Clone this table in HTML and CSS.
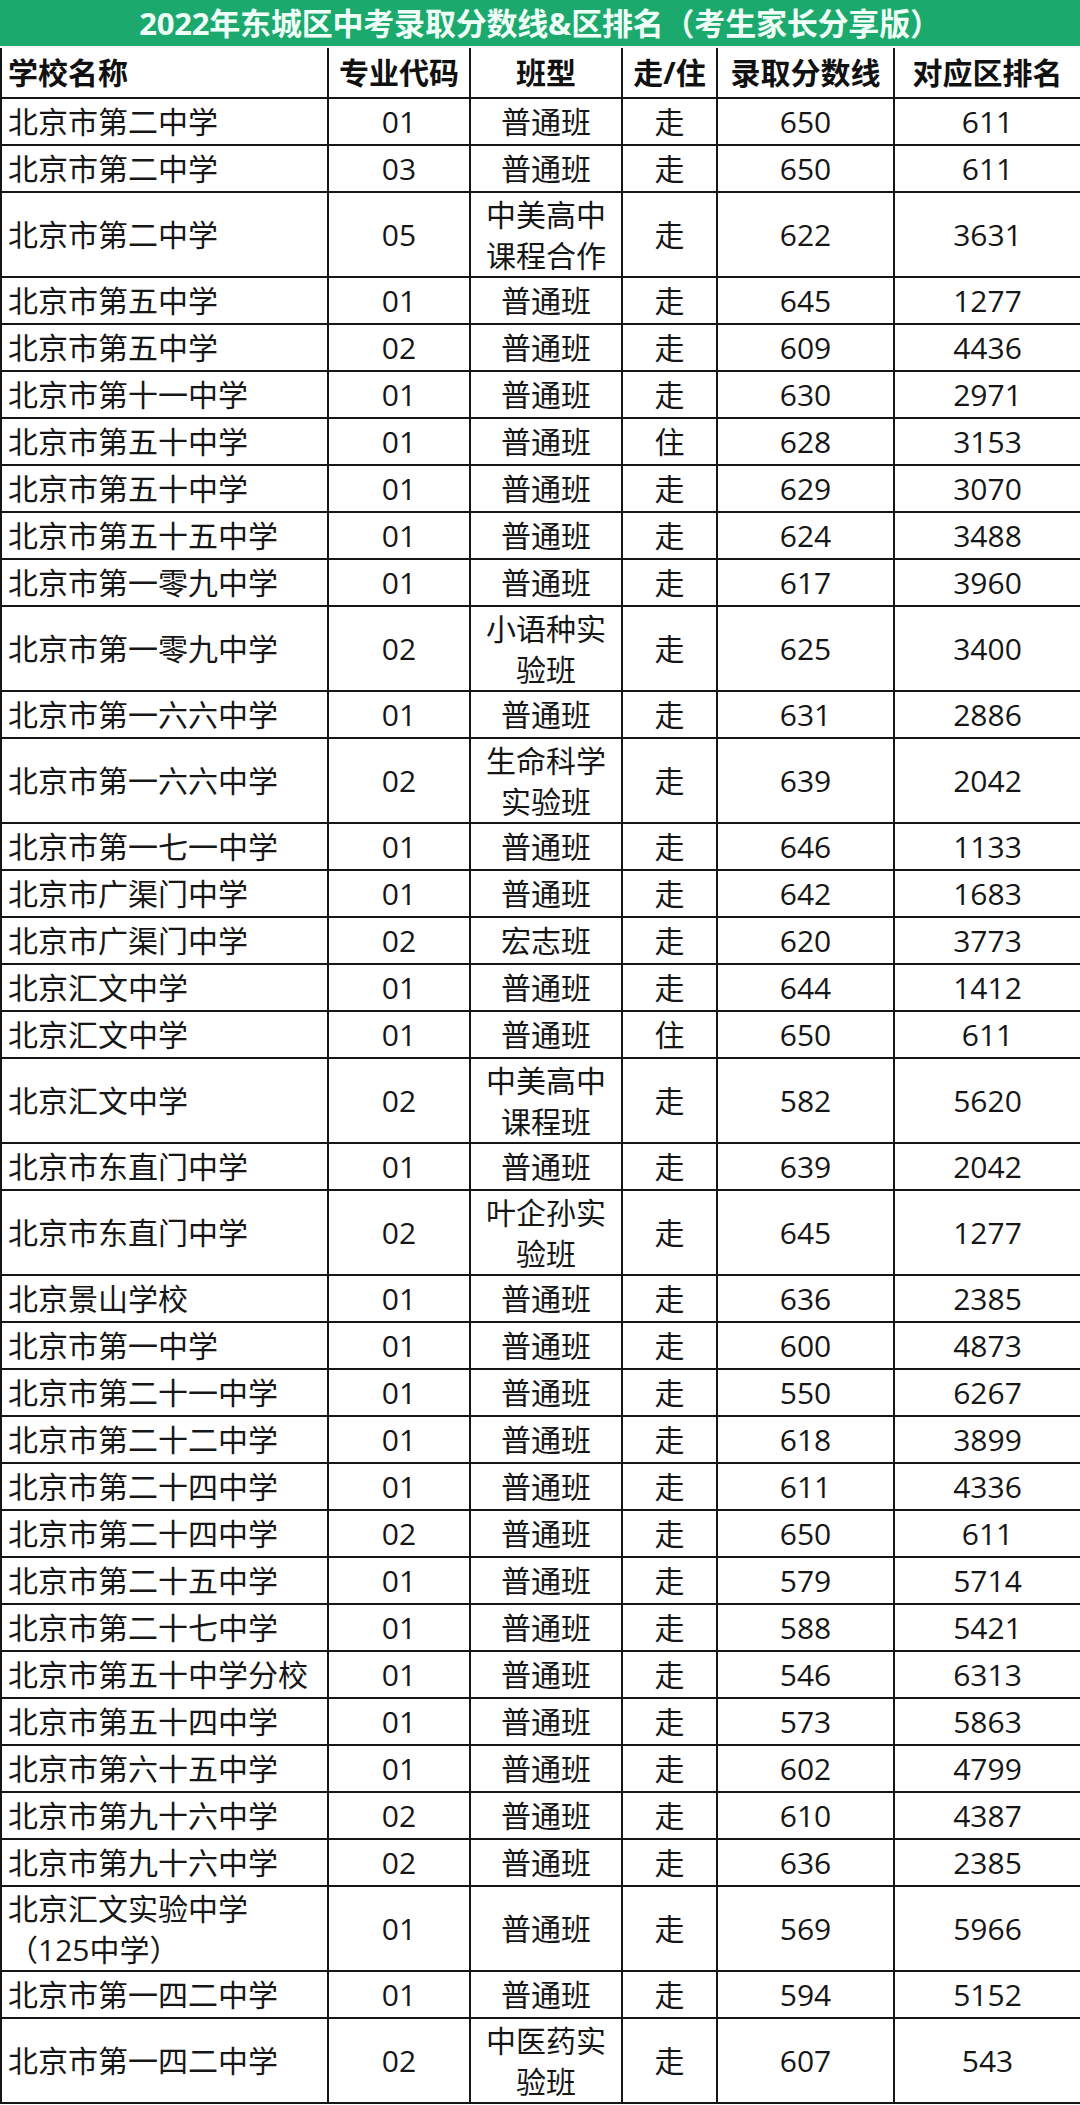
FILE: index.html
```html
<!DOCTYPE html>
<html lang="zh-CN">
<head>
<meta charset="utf-8">
<title>2022年东城区中考录取分数线&amp;区排名</title>
<link rel="stylesheet" href="styles.css">
</head>
<body>
<div class="sheet">
  <div class="title">2022年东城区中考录取分数线&amp;区排名（考生家长分享版）</div>
  <table class="grid">
    <colgroup>
      <col class="c-name"><col class="c-code"><col class="c-type"><col class="c-stay"><col class="c-score"><col class="c-rank">
    </colgroup>
    <thead>
      <tr class="head">
        <th class="name">学校名称</th><th>专业代码</th><th>班型</th><th>走/住</th><th>录取分数线</th><th>对应区排名</th>
      </tr>
    </thead>
    <tbody>
      <tr class="s"><td class="name">北京市第二中学</td><td>01</td><td>普通班</td><td>走</td><td>650</td><td>611</td></tr>
      <tr class="s"><td class="name">北京市第二中学</td><td>03</td><td>普通班</td><td>走</td><td>650</td><td>611</td></tr>
      <tr class="d"><td class="name">北京市第二中学</td><td>05</td><td class="wrap">中美高中<br>课程合作</td><td>走</td><td>622</td><td>3631</td></tr>
      <tr class="s"><td class="name">北京市第五中学</td><td>01</td><td>普通班</td><td>走</td><td>645</td><td>1277</td></tr>
      <tr class="s"><td class="name">北京市第五中学</td><td>02</td><td>普通班</td><td>走</td><td>609</td><td>4436</td></tr>
      <tr class="s"><td class="name">北京市第十一中学</td><td>01</td><td>普通班</td><td>走</td><td>630</td><td>2971</td></tr>
      <tr class="s"><td class="name">北京市第五十中学</td><td>01</td><td>普通班</td><td>住</td><td>628</td><td>3153</td></tr>
      <tr class="s"><td class="name">北京市第五十中学</td><td>01</td><td>普通班</td><td>走</td><td>629</td><td>3070</td></tr>
      <tr class="s"><td class="name">北京市第五十五中学</td><td>01</td><td>普通班</td><td>走</td><td>624</td><td>3488</td></tr>
      <tr class="s"><td class="name">北京市第一零九中学</td><td>01</td><td>普通班</td><td>走</td><td>617</td><td>3960</td></tr>
      <tr class="d"><td class="name">北京市第一零九中学</td><td>02</td><td class="wrap">小语种实<br>验班</td><td>走</td><td>625</td><td>3400</td></tr>
      <tr class="s"><td class="name">北京市第一六六中学</td><td>01</td><td>普通班</td><td>走</td><td>631</td><td>2886</td></tr>
      <tr class="d"><td class="name">北京市第一六六中学</td><td>02</td><td class="wrap">生命科学<br>实验班</td><td>走</td><td>639</td><td>2042</td></tr>
      <tr class="s"><td class="name">北京市第一七一中学</td><td>01</td><td>普通班</td><td>走</td><td>646</td><td>1133</td></tr>
      <tr class="s"><td class="name">北京市广渠门中学</td><td>01</td><td>普通班</td><td>走</td><td>642</td><td>1683</td></tr>
      <tr class="s"><td class="name">北京市广渠门中学</td><td>02</td><td>宏志班</td><td>走</td><td>620</td><td>3773</td></tr>
      <tr class="s"><td class="name">北京汇文中学</td><td>01</td><td>普通班</td><td>走</td><td>644</td><td>1412</td></tr>
      <tr class="s"><td class="name">北京汇文中学</td><td>01</td><td>普通班</td><td>住</td><td>650</td><td>611</td></tr>
      <tr class="d"><td class="name">北京汇文中学</td><td>02</td><td class="wrap">中美高中<br>课程班</td><td>走</td><td>582</td><td>5620</td></tr>
      <tr class="s"><td class="name">北京市东直门中学</td><td>01</td><td>普通班</td><td>走</td><td>639</td><td>2042</td></tr>
      <tr class="d"><td class="name">北京市东直门中学</td><td>02</td><td class="wrap">叶企孙实<br>验班</td><td>走</td><td>645</td><td>1277</td></tr>
      <tr class="s"><td class="name">北京景山学校</td><td>01</td><td>普通班</td><td>走</td><td>636</td><td>2385</td></tr>
      <tr class="s"><td class="name">北京市第一中学</td><td>01</td><td>普通班</td><td>走</td><td>600</td><td>4873</td></tr>
      <tr class="s"><td class="name">北京市第二十一中学</td><td>01</td><td>普通班</td><td>走</td><td>550</td><td>6267</td></tr>
      <tr class="s"><td class="name">北京市第二十二中学</td><td>01</td><td>普通班</td><td>走</td><td>618</td><td>3899</td></tr>
      <tr class="s"><td class="name">北京市第二十四中学</td><td>01</td><td>普通班</td><td>走</td><td>611</td><td>4336</td></tr>
      <tr class="s"><td class="name">北京市第二十四中学</td><td>02</td><td>普通班</td><td>走</td><td>650</td><td>611</td></tr>
      <tr class="s"><td class="name">北京市第二十五中学</td><td>01</td><td>普通班</td><td>走</td><td>579</td><td>5714</td></tr>
      <tr class="s"><td class="name">北京市第二十七中学</td><td>01</td><td>普通班</td><td>走</td><td>588</td><td>5421</td></tr>
      <tr class="s"><td class="name">北京市第五十中学分校</td><td>01</td><td>普通班</td><td>走</td><td>546</td><td>6313</td></tr>
      <tr class="s"><td class="name">北京市第五十四中学</td><td>01</td><td>普通班</td><td>走</td><td>573</td><td>5863</td></tr>
      <tr class="s"><td class="name">北京市第六十五中学</td><td>01</td><td>普通班</td><td>走</td><td>602</td><td>4799</td></tr>
      <tr class="s"><td class="name">北京市第九十六中学</td><td>02</td><td>普通班</td><td>走</td><td>610</td><td>4387</td></tr>
      <tr class="s"><td class="name">北京市第九十六中学</td><td>02</td><td>普通班</td><td>走</td><td>636</td><td>2385</td></tr>
      <tr class="d"><td class="name wrap">北京汇文实验中学<br>（125中学）</td><td>01</td><td>普通班</td><td>走</td><td>569</td><td>5966</td></tr>
      <tr class="s"><td class="name">北京市第一四二中学</td><td>01</td><td>普通班</td><td>走</td><td>594</td><td>5152</td></tr>
      <tr class="d"><td class="name">北京市第一四二中学</td><td>02</td><td class="wrap">中医药实<br>验班</td><td>走</td><td>607</td><td>543</td></tr>
    </tbody>
  </table>
</div>
</body>
</html>
```

FILE: styles.css
```css
html, body {
  margin: 0;
  padding: 0;
  background: #ffffff;
}

.sheet {
  width: 1080px;
  font-family: "Open Sans", "Noto Sans CJK SC", sans-serif;
  color: #161616;
}

.title {
  height: 46px;
  background: #1ca96d;
  color: #effff7;
  font-weight: 700;
  font-size: 31px;
  line-height: 46px;
  text-align: center;
  border-bottom: 2px solid #f4f4f4;
  letter-spacing: -0.2px;
}

.grid {
  width: 1080px;
  table-layout: fixed;
  border-collapse: collapse;
  font-size: 30px;
}

.c-name { width: 327px; }
.c-code { width: 142px; }
.c-type { width: 152px; }
.c-stay { width: 95px; }
.c-score { width: 177px; }
.c-rank { width: 187px; }

.grid th,
.grid td {
  border: 2px solid #161616;
  padding: 0;
  text-align: center;
  vertical-align: middle;
  white-space: nowrap;
  line-height: 36px;
  font-weight: 400;
}

.grid th {
  font-weight: 700;
  color: #111111;
  font-size: 30px;
}

.grid tr:first-child th {
  border-top: none;
}

.grid .name {
  text-align: left;
  padding-left: 6px;
}

.head { height: 50px; }
.s { height: 47px; }
.d { height: 85px; }

.grid td.wrap {
  line-height: 41px;
}
```
